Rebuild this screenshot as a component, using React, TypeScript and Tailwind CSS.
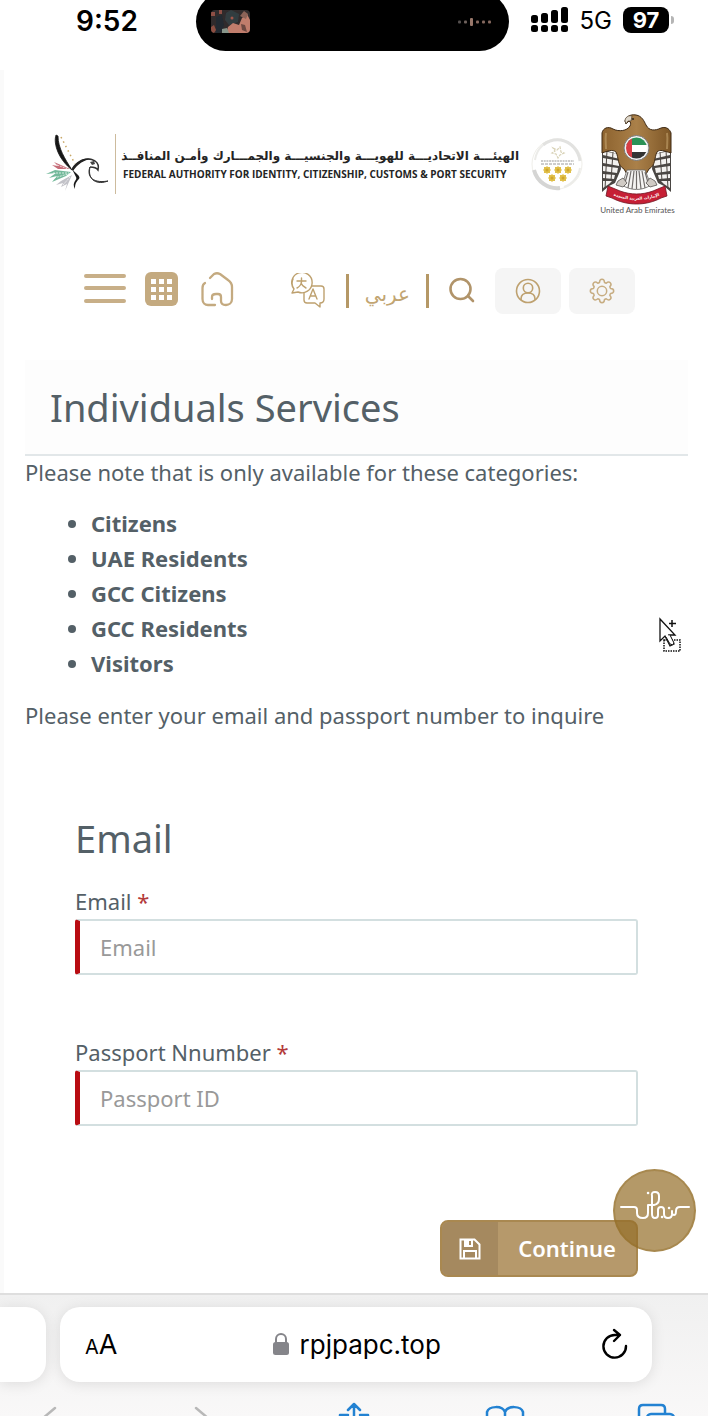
import React from "react";

const categories = ["Citizens", "UAE Residents", "GCC Citizens", "GCC Residents", "Visitors"];

function StatusBar() {
  return (
    <div className="relative flex h-[70px] items-start justify-between overflow-hidden bg-white pl-[76px] pr-[34px] font-[Inter,sans-serif] text-black">
      <span className="pt-[3px] text-[28px] font-semibold leading-9">9:52</span>
      <div className="absolute -top-2 left-[196px] right-[199px] flex h-[59px] items-center justify-between rounded-full bg-black pl-[15px] pr-4">
        <svg width="39" height="23" viewBox="0 0 39 23" aria-hidden="true">
          <defs>
            <clipPath id="thumb"><rect width="39" height="23" rx="4" /></clipPath>
            <filter id="soft"><feGaussianBlur stdDeviation="0.7" /></filter>
          </defs>
          <g clipPath="url(#thumb)">
            <rect width="39" height="23" fill="#302b2c" />
            <g filter="url(#soft)">
              <path d="M0 2h4v4H0zM8 0h3v4H8z" fill="#8e5045" />
              <path d="M0 17l3-2 2 5-2 3H0z" fill="#8d4f42" />
              <path d="M5 7l6-2 2 10-3 8H5z" fill="#202a30" />
              <path d="M15 3l5-3 8 4-1 8-9 3-4-5z" fill="#333c41" />
              <circle cx="21" cy="8" r="1.500" fill="#a3564a" />
              <path d="M17 17l5-4 6 2 3-7 5-4 3 6v14H15z" fill="#c07d6c" />
              <path d="M29 6l4-5 4 3-2 5z" fill="#8c6458" />
              <path d="M30 14l4 1 2 7-5-2z" fill="#6d4842" />
              <path d="M11 19l5-1 2 5h-7z" fill="#87958a" />
            </g>
          </g>
        </svg>
        <svg width="35" height="12" viewBox="0 0 35 12" fill="#86695f" aria-hidden="true">
          <rect x="0" y="4.500" width="3" height="3" rx="1" fill="#55504f" />
          <rect x="6" y="4.500" width="3" height="3" rx="1" fill="#6f625d" />
          <rect x="12" y="2" width="3" height="8" rx="1" fill="#98776a" />
          <rect x="18" y="4.500" width="3" height="3" rx="1" />
          <rect x="24" y="4.500" width="3" height="3" rx="1" />
          <rect x="30" y="4.500" width="3" height="3" rx="1" />
        </svg>
      </div>
      <div className="flex items-center gap-[11px] pt-[3px]">
        <svg width="38" height="26" viewBox="0 0 38 26" aria-hidden="true">
          <rect x="0" y="8" width="7" height="8" rx="2.500" />
          <rect x="10" y="6" width="7" height="10" rx="2.500" />
          <rect x="20" y="3" width="7" height="13" rx="2.500" />
          <rect x="30" y="0" width="7" height="16" rx="2.500" />
          <rect x="0" y="18" width="7" height="7" rx="2.500" />
          <rect x="10" y="18" width="7" height="7" rx="2.500" />
          <rect x="20" y="18" width="7" height="7" rx="2.500" />
          <rect x="30" y="18" width="7" height="7" rx="2.500" />
        </svg>
        <span className="pt-[2px] text-2xl leading-8">5G</span>
        <div className="flex items-center gap-[2px]">
          <span className="flex h-[26px] w-[46px] items-center justify-center rounded-lg bg-black text-[22px] font-bold leading-6 text-white">97</span>
          <span className="h-2 w-[3px] rounded-r-full bg-[#b5b5b5]" />
        </div>
      </div>
    </div>
  );
}

function FalconLogo() {
  return (
    <svg width="66" height="66" viewBox="3 0 66 66" className="shrink-0" aria-hidden="true">
      <path d="M15 4C12 13 18 29 31 39C24 28 17 17 17 5Z" fill="#161616" stroke="#161616" strokeWidth=".8" />
      <path d="M20 6L34 33" stroke="#c8a765" strokeWidth="1.500" strokeDasharray="1.500 3.500" fill="none" />
      <path d="M31 39C37 30 46 25 54 30C57 32 58 35 57 39C55 36 52 36 49 36" fill="none" stroke="#333" strokeWidth="1.500" />
      <path d="M31 37C36 29 44 26 51 28C42 29 37 33 32 40Z" fill="#222" />
      <path d="M49 31l4-1 1 3-3 1z" fill="#444" />
      <path d="M49 36C46 43 49 53 67 50C57 54 46 50 49 36Z" fill="#333" stroke="#333" strokeWidth="1" />
      <path d="M31 38C35 43 40 45 38 48C35 51 34 53 34 58C30 51 37 49 35 46Z" fill="#1a1a1a" />
      <path d="M29 38L13 31L17 35L11 34L17 38Z" fill="#c66c78" />
      <path d="M30 41L14 39L5 43L15 42L8 47L16 45L11 51L25 45Z" fill="#73b99a" />
      <path d="M31 44L20 50L15 54L22 52L20 56L26 53L24 60Z" fill="#c2c2c8" />
      <path d="M12 42L28 42M13 47L27 43M16 34L27 38M22 54L29 46" stroke="#fff" strokeWidth=".7" strokeDasharray="2 1" />
    </svg>
  );
}

function StarBadge() {
  const stars = [[16, 34], [27, 34], [37, 34], [21, 42], [32, 42]];
  return (
    <svg width="52" height="56" viewBox="0 0 52 56" className="shrink-0" aria-hidden="true">
      <circle cx="26" cy="28" r="25" fill="#fff" stroke="#f0efea" strokeWidth="1" />
      <path d="M12 9A24 24 0 0 1 30 4A24 24 0 0 1 49 25" fill="none" stroke="#e2e2e0" strokeWidth="3" />
      <path d="M3 34A24 24 0 0 0 29 52" fill="none" stroke="#d5d5d4" strokeWidth="4" />
      <path d="M4 24A24 24 0 0 1 12 9M33 51A24 24 0 0 0 49 32" fill="none" stroke="#ecece9" strokeWidth="2" />
      <path d="M22 12l4 2 3-3 1 5 3 1-4 2-2 3-2-4-4-1 3-2z" fill="none" stroke="#d9d3b8" strokeWidth="1.200" strokeDasharray="3 1" />
      <path d="M10 25h33" stroke="#bbb" strokeWidth="1.500" strokeDasharray="2 .7" />
      <path d="M10 28h33" stroke="#9c9c9c" strokeWidth="1" strokeDasharray="3 1" />
      {stars.map(([x, y]) => (
        <g key={`${x}-${y}`} fill="#e0bf4a">
          <rect x={x - 3} y={y - 3} width="6" height="6" />
          <path d={`M${x} ${y - 4}l4 4-4 4-4-4z`} />
          <circle cx={x} cy={y} r="1.500" fill="#cfa52c" />
        </g>
      ))}
    </svg>
  );
}

function WingFeathers() {
  return (
    <g>
      <path d="M2 36L20 42L21 56L15 70L9 73L2 79Z" fill="#4a4643" />
      <path d="M3 38L18 41L20 46L3 42ZM3 45L20 48L19 53L3 50ZM3 53L18 55L17 60L3 58ZM3 61L15 62L14 66L3 65ZM3 68L12 68L9 71L3 75Z" fill="#f3f1ef" />
      <path d="M7 37L5 76M13 39L11 68" stroke="#4b4541" strokeWidth="1" />
    </g>
  );
}

function EagleEmblem() {
  return (
    <figure className="flex w-[73px] shrink-0 flex-col items-center">
      <svg width="73" height="92" viewBox="1 0 73 92" role="img" aria-label="Falcon emblem">
        <defs>
          <linearGradient id="plumage" x1="0" x2="1">
            <stop offset="0" stopColor="#8d632f" />
            <stop offset=".5" stopColor="#aa8049" />
            <stop offset="1" stopColor="#7d5626" />
          </linearGradient>
          <clipPath id="roundel"><circle cx="36.500" cy="35" r="10.500" /></clipPath>
        </defs>
        <WingFeathers />
        <g transform="translate(73 0) scale(-1 1)"><WingFeathers /></g>
        <path d="M25 8C26 4 30 1 36 2C42 3 44 8 46 12C49 18 55 18 61 15C67 13 70 17 71 20V40C64 38 60 36 57 39C54 45 56 52 49 56L45 63H28L24 56C17 52 19 45 16 39C12 36 8 38 2 40V20C3 15 8 13 13 16C19 19 27 18 30 13C31 11 31 9 29 8L26 11Z" fill="url(#plumage)" stroke="#3f2a14" strokeWidth="1" />
        <path d="M25 8C25 4 29 2 32 3L31 8L28 8L26 11Z" fill="#ded7ca" stroke="#50402e" strokeWidth=".7" />
        <circle cx="33" cy="6" r=".9" fill="#1d1a17" />
        <path d="M6 20C5 26 6 31 6 36M67 20C68 26 67 31 67 36" stroke="#c3a16c" strokeWidth="2" opacity=".6" fill="none" />
        <path d="M27 57L45 57L51 72C42 78 31 78 22 72Z" fill="#f5f4f2" stroke="#676462" strokeWidth=".8" />
        <path d="M28 59L24 73M31 58L28 75M34 58L32 76M36.500 58V76M39 58L41 76M42 58L45 75M45 59L49 73" stroke="#6f6b69" strokeWidth="1.200" />
        <path d="M18 68l5-3 4 5-4 4-7-2zM55 68l-5-3-4 5 4 4 7-2z" fill="#d0cbc5" stroke="#575350" strokeWidth=".8" />
        <circle cx="36.500" cy="35" r="12.500" fill="#f3f3f3" stroke="#777" strokeWidth="1" />
        <g clipPath="url(#roundel)">
          <rect x="25" y="24" width="24" height="8" fill="#2a9156" />
          <rect x="25" y="32" width="24" height="7" fill="#fff" />
          <rect x="25" y="39" width="24" height="8" fill="#333" />
          <rect x="25" y="24" width="7" height="24" fill="#d83d45" />
        </g>
        <path d="M8 73L20 78C31 82 42 82 53 78L65 73L67 83L61 85C46 93 27 93 12 85L6 83Z" fill="#c61f35" stroke="#701522" strokeWidth=".8" />
        <path id="ribbon" d="M8 80C24 89 49 89 65 80" fill="none" />
        <text direction="rtl" textAnchor="middle" fontFamily="DejaVu Sans, sans-serif" fontSize="4" fontWeight="700" fill="#fff">
          <textPath href="#ribbon" startOffset="50%">الإمارات العربية المتحدة</textPath>
        </text>
      </svg>
      <figcaption className="whitespace-nowrap font-[Lato,sans-serif] text-[8px] leading-[10px] text-[#555]">United Arab Emirates</figcaption>
    </figure>
  );
}

function Branding() {
  return (
    <header className="flex items-center pl-[44px] pr-[34px] pt-[43px]">
      <FalconLogo />
      <span className="ml-[5px] h-[60px] w-px shrink-0 bg-[#cdbb9d]" />
      <div className="ml-[7px] w-[396px] shrink-0 whitespace-nowrap text-[#242424]">
        <p dir="rtl" lang="ar" className="font-['DejaVu_Sans',sans-serif] text-[12px] font-bold leading-5">الهيئـــة الاتحاديـــة للهويـــة والجنسيـــة والجمـــارك وأمـن المنافــذ</p>
        <p className="font-['Open_Sans',sans-serif] text-[10px] font-bold leading-4">FEDERAL AUTHORITY FOR IDENTITY, CITIZENSHIP, CUSTOMS &amp; PORT SECURITY</p>
      </div>
      <div className="ml-auto flex items-center gap-[18px]">
        <StarBadge />
        <EagleEmblem />
      </div>
    </header>
  );
}

function Toolbar() {
  return (
    <nav className="flex items-center justify-between pl-[84px] pr-[73px] pt-[53px]" aria-label="Main">
      <div className="flex items-center gap-[19px] pb-1">
        <button type="button" aria-label="Menu">
          <svg width="42" height="34" viewBox="0 0 42 34" stroke="#c8af88" strokeWidth="4" strokeLinecap="round"><path d="M2 4h38M2 16h38M2 29h38" /></svg>
        </button>
        <button type="button" aria-label="Services">
          <svg width="33" height="34" viewBox="0 0 33 34">
            <rect width="33" height="34" rx="6" fill="#c4aa80" />
            <path d="M6 7h5v5H6zM14 7h5v5h-5zM22 7h5v5h-5zM6 15h5v5H6zM14 15h5v5h-5zM22 15h5v5h-5zM6 23h5v5H6zM14 23h5v5h-5zM22 23h5v5h-5z" fill="#fff" />
          </svg>
        </button>
        <a href="#" aria-label="Home" className="ml-1">
          <svg width="34" height="36" viewBox="1 0 34 36" fill="none" stroke="#c4aa80" strokeWidth="2.300" strokeLinecap="round" strokeLinejoin="round">
            <path d="M5 12C3 13 2.500 15 2.500 17V28C2.500 32 5 34 8 34H15M10 7L14 3C16 2 18 2 20 3L28 9C31 11 32 13 32 16V28C32 32 29 34 26 34C23 34 21 33 21 30V26C21 24 20 23 18 23H16C14 23 12 24 12 26V28" />
          </svg>
        </a>
      </div>
      <div className="flex items-center">
        <button type="button" aria-label="Translate" className="mr-5">
          <svg width="35" height="36" viewBox="1 1 35 36" fill="none" stroke="#bea16f" strokeWidth="1.400" strokeLinecap="round" strokeLinejoin="round">
            <path d="M4 17L2 21L8 20A10.200 10.200 0 1 0 4 17A10.200 10.200 0 0 1 3 7" />
            <path d="M7 9h9M11.500 6v4C11 13 9 15 7 16M11 11C12 14 14 15 16 16" />
            <path d="M22 14h9q3 0 3 3v10q0 4-4 4v4l-5-4h-8q-3 0-3-3v-7" />
            <path d="M19 27l4-10 4 10M20.500 24h5" />
          </svg>
        </button>
        <span className="h-[34px] w-[3px] bg-[#b59866]" />
        <a href="#" lang="ar" className="mx-4 pt-[6px] font-['DejaVu_Sans',sans-serif] text-[20px] leading-8 text-[#c2a572]">عربي</a>
        <span className="h-[34px] w-[3px] bg-[#b59866]" />
        <button type="button" aria-label="Search" className="ml-5 mr-5">
          <svg width="26" height="28" viewBox="0 0 26 28" fill="none" stroke="#b1946a" strokeWidth="2.600" strokeLinecap="round"><circle cx="11.500" cy="12" r="10" /><path d="M19 19l5 5" /></svg>
        </button>
        <button type="button" aria-label="Profile" className="flex h-[46px] w-[66px] items-center justify-center rounded-lg bg-[#f5f5f5]">
          <svg width="26" height="26" viewBox="0 0 26 26" fill="none" stroke="#bea16f" strokeWidth="1.600"><circle cx="13" cy="13" r="11.500" /><circle cx="13" cy="10" r="4.700" /><path d="M6 22v-1c0-4 3-6 7-6s7 2 7 6v1" /></svg>
        </button>
        <button type="button" aria-label="Settings" className="ml-2 flex h-[46px] w-[66px] items-center justify-center rounded-lg bg-[#f5f5f5]">
          <svg width="26" height="26" viewBox="0 0 26 26" fill="none" stroke="#c7ad82" strokeWidth="1.500" strokeLinejoin="round">
            <circle cx="13" cy="13" r="4.700" />
            <path d="M10.500 4.500Q10.600 1.300 13 1.300T15.500 4.500L17.200 5.200Q19.600 3 21.300 4.700T20.800 8.800L21.500 10.500Q24.700 10.600 24.700 13T21.500 15.500L20.800 17.200Q23 19.600 21.300 21.300T17.200 20.800L15.500 21.500Q15.400 24.700 13 24.700T10.500 21.500L8.800 20.800Q6.400 23 4.700 21.300T5.200 17.200L4.500 15.500Q1.300 15.400 1.300 13T4.500 10.500L5.200 8.800Q3 6.400 4.700 4.700T8.800 5.200Z" />
          </svg>
        </button>
      </div>
    </nav>
  );
}

function Field({ id, label, placeholder, type }: { id: string; label: string; placeholder: string; type: string }) {
  return (
    <div>
      <label htmlFor={id} className="block text-[22px] leading-9">{label} <span className="text-[#b33a3a]">*</span></label>
      <input id={id} type={type} placeholder={placeholder} className="block h-[56px] w-full rounded-[3px] border-2 border-l-[5px] border-[#d3dfe0] border-l-[#b80c12] bg-white pl-5 text-[22px] placeholder:text-[#999] placeholder:opacity-100" />
    </div>
  );
}

function InquiryForm() {
  return (
    <form className="px-[50px] pb-4 pt-20" onSubmit={(e) => e.preventDefault()}>
      <h2 className="text-[38px] leading-[50px]">Email</h2>
      <div className="mt-5 flex flex-col gap-[59px]">
        <Field id="email" label="Email" placeholder="Email" type="email" />
        <Field id="passport" label="Passport Nnumber" placeholder="Passport ID" type="text" />
      </div>
      <div className="mt-[94px] flex justify-end">
        <button type="button" className="flex h-[57px] w-[198px] overflow-hidden rounded-lg border-2 border-[#a98850] bg-[#b6996b] text-white">
          <span className="flex h-full w-14 items-center justify-center bg-[#a5895f]">
            <svg width="22" height="22" viewBox="0 0 22 22" fill="none" stroke="#fff" strokeWidth="2">
              <path d="M1.500 1.500h14l5 5v14h-19zM5 20v-7h12v7" />
              <path d="M5 2h9v7H5z" fill="#fff" stroke="none" /><path d="M10 3h2v4h-2z" fill="#a5895f" stroke="none" />
            </svg>
          </span>
          <span className="flex h-full flex-1 items-center justify-center text-[22px] font-semibold">Continue</span>
        </button>
      </div>
    </form>
  );
}

function ChatBubble() {
  return (
    <button type="button" aria-label="Assistant" className="absolute bottom-[41px] right-3 flex size-[83px] items-center justify-center rounded-full border-2 border-[#946d28]/40 bg-[#946d28]/70">
      <svg width="70" height="30" viewBox="0 0 70 30" fill="none" stroke="#fff" strokeWidth="2" strokeLinecap="round" strokeLinejoin="round" className="mb-3 shrink-0">
        <path d="M1 17H14Q17 17 17 20V23Q17 28 23 28Q28 28 28 23V15H34Q39 14 39 9V6Q39 2 35 2T32 6V24Q32 28 35 28T38 25V20Q38 17 41 17T44 20V24Q44 28 48 28T52 24V21M52 24Q56 27 56 21Q56 17 60 17H69" />
        <path d="M28 3h.1M42 27h.1M49 18h.1" strokeWidth="2.500" />
      </svg>
    </button>
  );
}

function DragCursor() {
  return (
    <svg width="24" height="38" viewBox="0 0 24 38" className="absolute right-[25px] top-[257px]" aria-hidden="true">
      <path d="M1 2V24L6 19L11 29L15 27L10 18H16Z" fill="#fff" stroke="#111" strokeWidth="1.300" />
      <path d="M13 3v7M10 6.500h7" stroke="#111" strokeWidth="1.500" />
      <rect x="5" y="23" width="16" height="11" fill="none" stroke="#111" strokeWidth="1.500" strokeDasharray="1.500 1" />
      <path d="M7 20l4 7q3 2 4-1l-4-8" fill="#fff" stroke="#111" />
    </svg>
  );
}

function BrowserBar() {
  return (
    <footer className="border-t-2 border-[#dedede] bg-gradient-to-b from-[#f0f0f0] to-[#f9f8f8] pt-3 font-[Inter,sans-serif] text-black">
      <div className="flex pr-14">
        <div className="h-[75px] w-[46px] shrink-0 rounded-r-[20px] bg-white shadow-[0_2px_14px_rgba(0,0,0,0.1)]" />
        <div className="ml-[14px] flex h-[75px] flex-1 items-center justify-between rounded-[20px] bg-white pl-[25px] pr-6 shadow-[0_2px_14px_rgba(0,0,0,0.1)]">
          <button type="button" aria-label="Page settings" className="flex items-baseline pt-[3px] leading-8"><span className="text-[20px]">A</span><span className="text-[27px]">A</span></button>
          <div className="flex items-center gap-[11px] text-[26px] leading-9">
            <svg width="16" height="24" viewBox="0 0 16 24" aria-hidden="true"><rect y="9" width="16" height="13" rx="2.500" fill="#85858a" /><path d="M3 10V6a5 5 0 0 1 10 0V10" fill="none" stroke="#85858a" strokeWidth="2" /></svg>
            <span>rpjpapc.top</span>
          </div>
          <button type="button" aria-label="Reload" className="ml-[6px]">
            <svg width="26" height="34" viewBox="0 0 26 34" fill="none" stroke="#000" strokeWidth="2.400" strokeLinecap="round" strokeLinejoin="round"><path d="M24 18A11.300 11.300 0 1 1 13 7H18M12 2l6 5-6 6" /></svg>
          </button>
        </div>
      </div>
      <div className="mt-5 flex h-[15px] items-start justify-between overflow-hidden px-8">
        <button type="button" aria-label="Back"><svg width="40" height="34" viewBox="0 0 40 34" fill="none" stroke="#b8b8b8" strokeWidth="2.500" strokeLinecap="round"><path d="M23 6L10 17L23 28" /></svg></button>
        <button type="button" aria-label="Forward"><svg width="40" height="34" viewBox="0 0 40 34" fill="none" stroke="#b8b8b8" strokeWidth="2.500" strokeLinecap="round"><path d="M13 6L26 17L13 28" /></svg></button>
        <button type="button" aria-label="Share"><svg width="40" height="38" viewBox="0 0 40 38" fill="none" stroke="#2382d2" strokeWidth="2.500" strokeLinecap="round" strokeLinejoin="round"><path d="M20 24V2M14 8l6-6 6 6M14 13H6v24h28V13h-8" /></svg></button>
        <button type="button" aria-label="Bookmarks"><svg width="40" height="36" viewBox="0 0 40 36" fill="none" stroke="#2382d2" strokeWidth="2.500"><path d="M20 32V10C17 3 4 4 2 10V32Q11 26 20 32Q29 26 38 32V10C36 4 23 3 20 10" /></svg></button>
        <button type="button" aria-label="Tabs"><svg width="40" height="38" viewBox="0 0 40 38" fill="none" stroke="#2382d2" strokeWidth="2.500"><path d="M10 27H7q-4 0-4-4V7q0-4 4-4h18q4 0 4 4v4" /><rect x="11" y="12" width="27" height="24" rx="4" /></svg></button>
      </div>
    </footer>
  );
}

export default function App() {
  return (
    <div className="flex min-h-screen flex-col overflow-hidden bg-white font-['Noto_Sans',sans-serif] text-[#546067]">
      <StatusBar />
      <div className="relative flex flex-1 flex-col border-l-4 border-[#fafafa]">
        <div className="-ml-1">
          <Branding />
          <Toolbar />
          <main className="relative mt-[46px] pl-[25px] pr-5">
            <h1 className="border-b-2 border-[#e2e7e9] bg-[#fdfdfd] py-[22px] pl-[25px] text-[38px] leading-[50px]">Individuals Services</h1>
            <p className="text-[22px] leading-8">Please note that is only available for these categories:</p>
            <ul className="list-disc pb-4 pl-[66px] pt-[18px] text-[22px] font-bold leading-[35px]">
              {categories.map((name) => <li key={name}>{name}</li>)}
            </ul>
            <p className="text-[22px] leading-9">Please enter your email and passport number to inquire</p>
            <InquiryForm />
            <DragCursor />
          </main>
        </div>
        <ChatBubble />
      </div>
      <BrowserBar />
    </div>
  );
}
